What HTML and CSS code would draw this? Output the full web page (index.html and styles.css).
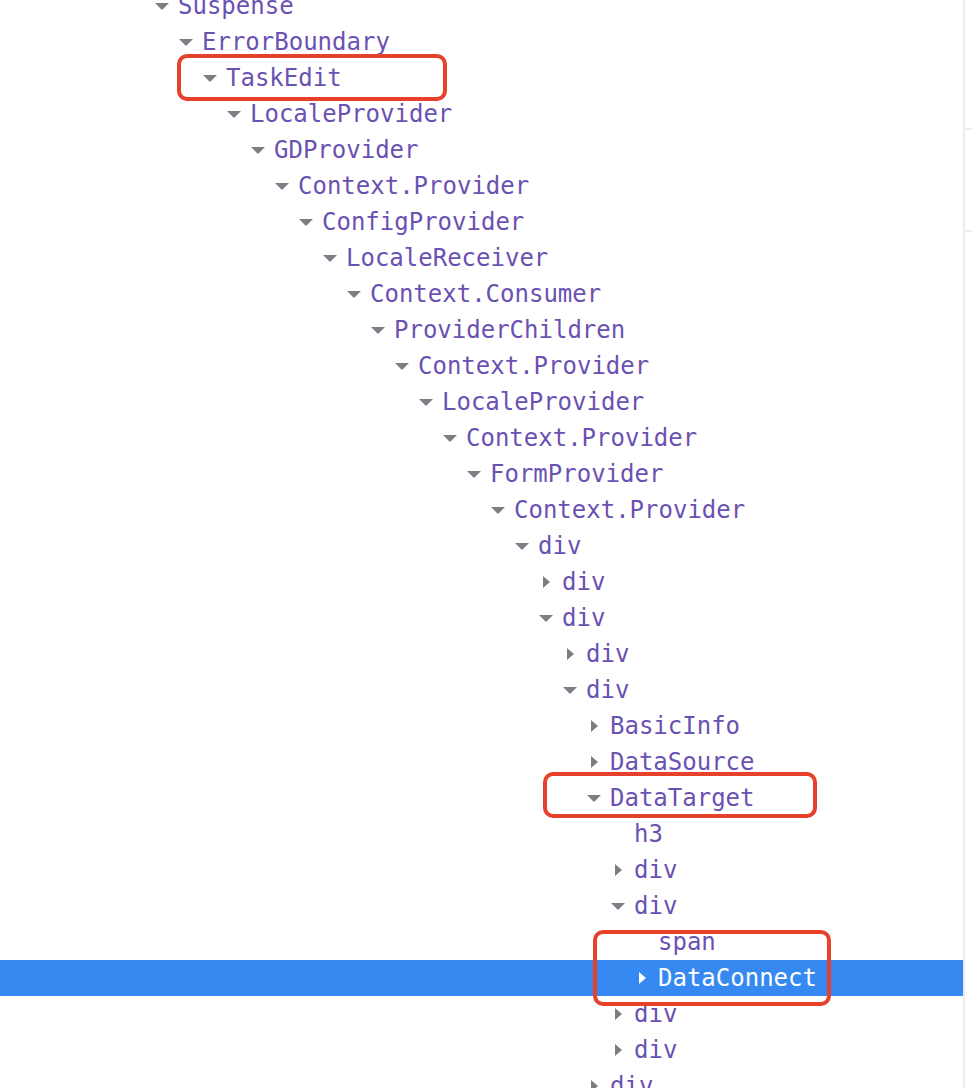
FILE: index.html
```html
<!DOCTYPE html>
<html>
<head>
<meta charset="utf-8">
<link rel="stylesheet" href="styles.css">
</head>
<body>
<div class="panel">
  <div class="tree">
    <div class="row" style="--d:0"><span class="tog down"></span><span class="name">Suspense</span></div>
    <div class="row" style="--d:1"><span class="tog down"></span><span class="name">ErrorBoundary</span></div>
    <div class="row" style="--d:2"><span class="tog down"></span><span class="name">TaskEdit</span></div>
    <div class="row" style="--d:3"><span class="tog down"></span><span class="name">LocaleProvider</span></div>
    <div class="row" style="--d:4"><span class="tog down"></span><span class="name">GDProvider</span></div>
    <div class="row" style="--d:5"><span class="tog down"></span><span class="name">Context.Provider</span></div>
    <div class="row" style="--d:6"><span class="tog down"></span><span class="name">ConfigProvider</span></div>
    <div class="row" style="--d:7"><span class="tog down"></span><span class="name">LocaleReceiver</span></div>
    <div class="row" style="--d:8"><span class="tog down"></span><span class="name">Context.Consumer</span></div>
    <div class="row" style="--d:9"><span class="tog down"></span><span class="name">ProviderChildren</span></div>
    <div class="row" style="--d:10"><span class="tog down"></span><span class="name">Context.Provider</span></div>
    <div class="row" style="--d:11"><span class="tog down"></span><span class="name">LocaleProvider</span></div>
    <div class="row" style="--d:12"><span class="tog down"></span><span class="name">Context.Provider</span></div>
    <div class="row" style="--d:13"><span class="tog down"></span><span class="name">FormProvider</span></div>
    <div class="row" style="--d:14"><span class="tog down"></span><span class="name">Context.Provider</span></div>
    <div class="row" style="--d:15"><span class="tog down"></span><span class="name">div</span></div>
    <div class="row" style="--d:16"><span class="tog right"></span><span class="name">div</span></div>
    <div class="row" style="--d:16"><span class="tog down"></span><span class="name">div</span></div>
    <div class="row" style="--d:17"><span class="tog right"></span><span class="name">div</span></div>
    <div class="row" style="--d:17"><span class="tog down"></span><span class="name">div</span></div>
    <div class="row" style="--d:18"><span class="tog right"></span><span class="name">BasicInfo</span></div>
    <div class="row" style="--d:18"><span class="tog right"></span><span class="name">DataSource</span></div>
    <div class="row" style="--d:18"><span class="tog down"></span><span class="name">DataTarget</span></div>
    <div class="row" style="--d:19"><span class="tog"></span><span class="name">h3</span></div>
    <div class="row" style="--d:19"><span class="tog right"></span><span class="name">div</span></div>
    <div class="row" style="--d:19"><span class="tog down"></span><span class="name">div</span></div>
    <div class="row" style="--d:20"><span class="tog"></span><span class="name">span</span></div>
    <div class="row selected" style="--d:20"><span class="tog right"></span><span class="name">DataConnect</span></div>
    <div class="row" style="--d:19"><span class="tog right"></span><span class="name">div</span></div>
    <div class="row" style="--d:19"><span class="tog right"></span><span class="name">div</span></div>
    <div class="row" style="--d:18"><span class="tog right"></span><span class="name">div</span></div>
  </div>
  <div class="side">
    <div class="side-seg s1"></div>
    <div class="side-seg s2"></div>
    <div class="side-seg s3"></div>
  </div>
</div>
<div class="mark m1"></div>
<div class="mark m2"></div>
<div class="mark m3"></div>
</body>
</html>
```
FILE: styles.css
```css
html, body {
  margin: 0;
  padding: 0;
  background: #ffffff;
  overflow: hidden;
}
body {
  width: 972px;
  height: 1088px;
  position: relative;
}
.panel {
  display: flex;
  height: 1088px;
}
.tree {
  width: 963px;
  margin-top: -12px;
  border-right: 2px solid #ececec;
  flex: none;
}
.row {
  height: 36px;
  display: flex;
  align-items: center;
  padding-left: calc(152px + var(--d) * 24px);
  font-family: "DejaVu Sans Mono", "Liberation Mono", monospace;
  font-size: 24px;
  line-height: 36px;
  color: #6a51b2;
  white-space: nowrap;
}
.tog {
  width: 20px;
  height: 36px;
  margin-right: 6px;
  flex: none;
  position: relative;
}
.tog.down::after {
  content: "";
  position: absolute;
  left: 3px;
  top: 15px;
  border-left: 7px solid transparent;
  border-right: 7px solid transparent;
  border-top: 7px solid #7d7d85;
}
.tog.right::after {
  content: "";
  position: absolute;
  left: 7px;
  top: 12px;
  border-top: 6px solid transparent;
  border-bottom: 6px solid transparent;
  border-left: 7px solid #7d7d85;
}
.row.selected {
  background: #3689f0;
  color: #ffffff;
}
.row.selected .tog.right::after {
  border-left-color: #ffffff;
}
.side {
  flex: 1;
  display: flex;
  flex-direction: column;
}
.side-seg.s1 {
  height: 128px;
  border-bottom: 2px solid #ececec;
}
.side-seg.s2 {
  height: 100px;
  border-bottom: 2px solid #ececec;
}
.mark {
  position: absolute;
  border: 4px solid #e8412b;
  border-radius: 10px;
  box-sizing: border-box;
}
.mark.m1 {
  left: 177px;
  top: 54px;
  width: 270px;
  height: 47px;
}
.mark.m2 {
  left: 543px;
  top: 772px;
  width: 274px;
  height: 46px;
}
.mark.m3 {
  left: 593px;
  top: 930px;
  width: 238px;
  height: 76px;
}
```
